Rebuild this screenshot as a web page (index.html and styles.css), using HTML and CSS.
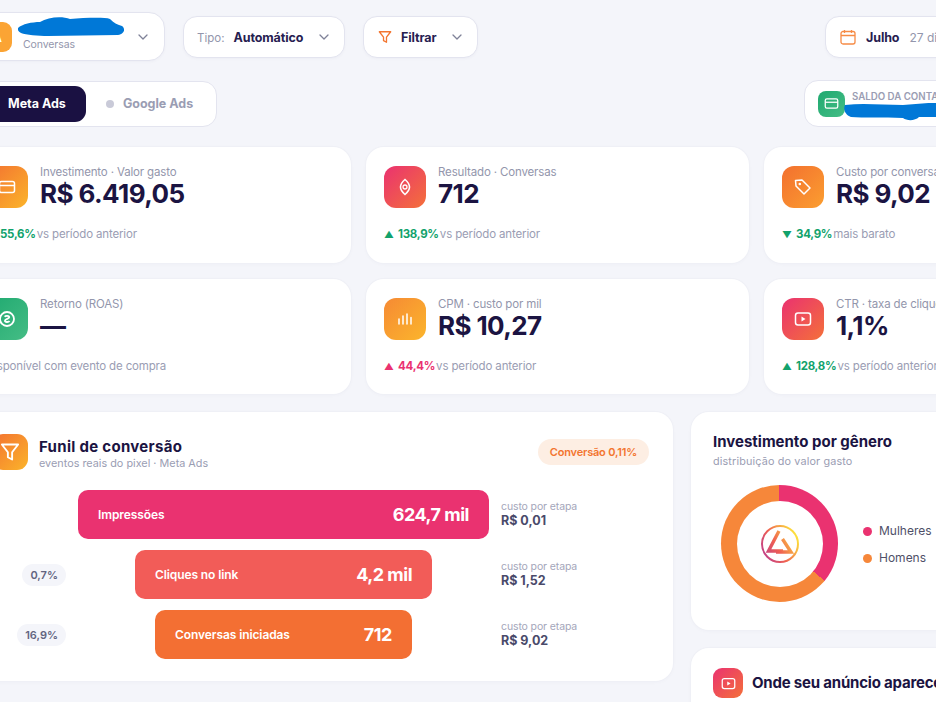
FILE: index.html
```html
<!DOCTYPE html>
<html lang="pt-BR">
<head>
  <title>Painel de campanhas</title>
  <meta charset="UTF-8"/>
  <meta name="viewport" content="width=device-width,initial-scale=1"/>
  <link rel="stylesheet" href="styles.css">
</head>
<body>
<svg class="sprites" width="0" height="0">
  <symbol id="chev" viewBox="0 0 10 10"><path d="M1 3l4 4 4-4" fill="none" stroke="currentColor" stroke-width="1.300" stroke-linecap="round" stroke-linejoin="round"/></symbol>
  <symbol id="funnel" viewBox="0 0 16 16"><path d="M1.500 2h13L9.700 8.200V14l-3.400-1.800V8.200z" fill="none" stroke="currentColor" stroke-width="1.500" stroke-linejoin="round"/></symbol>
  <symbol id="card" viewBox="0 0 18 18"><rect x="1.500" y="3.500" width="15" height="11" rx="2" fill="none" stroke="currentColor" stroke-width="1.500"/><path d="M1.500 7.500h15" stroke="currentColor" stroke-width="1.500"/></symbol>
  <symbol id="play" viewBox="0 0 18 18"><rect x="1.500" y="3" width="15" height="12" rx="2.500" fill="none" stroke="currentColor" stroke-width="1.500"/><path d="M7.500 6.500l4 2.500-4 2.500z" fill="currentColor"/></symbol>
</svg>

<div class="shell">
  <div class="toolbar">
    <div class="pill account">
      <span class="acc-icon">A</span>
      <div class="acc-text">
        <div class="acc-name">
          <svg class="blob blob-acc" viewBox="0 0 107 21"><path d="M0 12C4 8 14 6 22 6 30 1 44 0 52 3 66 2 86 1 92 3 96 7 100 9 104 10 108 13 106 18 100 19L30 20C20 20 8 19 3 17 0 15-1 13 0 12Z"/></svg>
        </div>
        <div class="acc-sub">Conversas</div>
      </div>
      <svg class="chev"><use href="#chev"/></svg>
    </div>
    <div class="pill select">
      <span class="select-label">Tipo:</span>
      <b class="select-value">Automático</b>
      <svg class="chev"><use href="#chev"/></svg>
    </div>
    <div class="pill filter">
      <svg class="filter-icon"><use href="#funnel"/></svg>
      <b class="select-value">Filtrar</b>
      <svg class="chev"><use href="#chev"/></svg>
    </div>
    <div class="pill date">
      <svg class="date-icon" viewBox="0 0 16 16"><rect x="1" y="2.500" width="14" height="12.500" rx="2" fill="none" stroke="currentColor" stroke-width="1.300"/><path d="M1 6.500h14M4.500 1v3M11.500 1v3" stroke="currentColor" stroke-width="1.300"/></svg>
      <b class="select-value">Julho</b>
      <span class="date-days">27 dias</span>
    </div>
  </div>

  <div class="subbar">
    <div class="tabs">
      <div class="tab active"><i class="dot dot-green"></i>Meta Ads</div>
      <div class="tab"><i class="dot"></i>Google Ads</div>
    </div>
    <div class="saldo">
      <span class="saldo-icon"><svg><use href="#card"/></svg></span>
      <div>
        <div class="saldo-label">SALDO DA CONTA</div>
        <div class="saldo-value">
          <svg class="blob blob-saldo" viewBox="0 0 120 18"><path d="M2 2C20 0 40 2 60 2 74 1 90-1 100 0 110 2 116 5 120 7V15C108 14 90 14 76 14 72 18 64 18 60 15 40 14 20 15 8 14 2 12 0 6 2 2Z"/></svg>
        </div>
      </div>
    </div>
  </div>

  <div class="kpis">
    <div class="kpi">
      <div class="kpi-top">
        <span class="kpi-icon grad-orange"><svg><use href="#card"/></svg></span>
        <div>
          <div class="kpi-label">Investimento · Valor gasto</div>
          <div class="kpi-value">R$ 6.419,05</div>
        </div>
      </div>
      <div class="kpi-delta"><b class="good"><i class="tri">▲</i> 55,6%</b> vs período anterior</div>
    </div>
    <div class="kpi">
      <div class="kpi-top">
        <span class="kpi-icon grad-red">
          <svg viewBox="0 0 18 18"><path d="M9 1.500C12.500 4.500 13.500 7 13.500 9S12.500 13.500 9 16.500C5.500 13.500 4.500 11 4.500 9S5.500 4.500 9 1.500z" fill="none" stroke="currentColor" stroke-width="1.600"/><circle cx="9" cy="9" r="2" fill="none" stroke="currentColor" stroke-width="1.300"/></svg>
        </span>
        <div>
          <div class="kpi-label">Resultado · Conversas</div>
          <div class="kpi-value">712</div>
        </div>
      </div>
      <div class="kpi-delta"><b class="good"><i class="tri">▲</i> 138,9%</b> vs período anterior</div>
    </div>
    <div class="kpi">
      <div class="kpi-top">
        <span class="kpi-icon grad-tag">
          <svg viewBox="0 0 18 18"><path d="M1.500 2.500l6.500-.5 8 8-6 6-8-8z" fill="none" stroke="currentColor" stroke-width="1.500" stroke-linejoin="round"/><circle cx="5.800" cy="6" r="1.300" fill="currentColor"/></svg>
        </span>
        <div>
          <div class="kpi-label">Custo por conversa</div>
          <div class="kpi-value">R$ 9,02</div>
        </div>
      </div>
      <div class="kpi-delta"><b class="good"><i class="tri">▼</i> 34,9%</b> mais barato</div>
    </div>
    <div class="kpi">
      <div class="kpi-top">
        <span class="kpi-icon grad-green">
          <svg viewBox="0 0 18 18"><circle cx="9" cy="9" r="7" fill="none" stroke="currentColor" stroke-width="1.800"/><path d="M6.700 6.700C7.500 5.500 11.300 5.500 11.200 7.300 11.200 9 7 8.800 7 10.700 7 12.300 10.500 12.400 11.500 11" fill="none" stroke="currentColor" stroke-width="1.900"/></svg>
        </span>
        <div>
          <div class="kpi-label">Retorno (ROAS)</div>
          <div class="kpi-value">—</div>
        </div>
      </div>
      <div class="kpi-delta">Disponível com evento de compra</div>
    </div>
    <div class="kpi">
      <div class="kpi-top">
        <span class="kpi-icon grad-amber">
          <svg viewBox="0 0 18 18"><path d="M3 9v5M7 6v8M11 4v10M15 7.500V14" stroke="currentColor" stroke-width="1.500" stroke-linecap="round"/></svg>
        </span>
        <div>
          <div class="kpi-label">CPM · custo por mil</div>
          <div class="kpi-value">R$ 10,27</div>
        </div>
      </div>
      <div class="kpi-delta"><b class="bad"><i class="tri">▲</i> 44,4%</b> vs período anterior</div>
    </div>
    <div class="kpi">
      <div class="kpi-top">
        <span class="kpi-icon grad-red"><svg><use href="#play"/></svg></span>
        <div>
          <div class="kpi-label">CTR · taxa de cliques</div>
          <div class="kpi-value">1,1%</div>
        </div>
      </div>
      <div class="kpi-delta"><b class="good"><i class="tri">▲</i> 128,8%</b> vs período anterior</div>
    </div>
  </div>

  <div class="lower">
    <div class="panel funnel-panel">
      <div class="panel-head">
        <span class="panel-icon grad-orange"><svg><use href="#funnel"/></svg></span>
        <div class="panel-titles">
          <div class="panel-title funnel-title">Funil de conversão</div>
          <div class="panel-sub">eventos reais do pixel · Meta Ads</div>
        </div>
        <span class="conv-badge">Conversão 0,11%</span>
      </div>
      <div class="funnel">
        <div class="funnel-row">
          <div class="funnel-pct"></div>
          <div class="funnel-track">
            <div class="bar bar-pink" style="width:100%"><span>Impressões</span><b>624,7 mil</b></div>
          </div>
          <div class="cost"><span>custo por etapa</span><b>R$ 0,01</b></div>
        </div>
        <div class="funnel-row">
          <div class="funnel-pct"><span class="pct">0,7%</span></div>
          <div class="funnel-track">
            <div class="bar bar-coral" style="width:72.3%"><span>Cliques no link</span><b>4,2 mil</b></div>
          </div>
          <div class="cost"><span>custo por etapa</span><b>R$ 1,52</b></div>
        </div>
        <div class="funnel-row">
          <div class="funnel-pct"><span class="pct">16,9%</span></div>
          <div class="funnel-track">
            <div class="bar bar-orange" style="width:62.5%"><span>Conversas iniciadas</span><b>712</b></div>
          </div>
          <div class="cost"><span>custo por etapa</span><b>R$ 9,02</b></div>
        </div>
      </div>
    </div>

    <div class="side">
      <div class="panel gender-panel">
        <div class="panel-title">Investimento por gênero</div>
        <div class="panel-sub gender-sub">distribuição do valor gasto</div>
        <div class="gender-body">
          <div class="donut">
            <div class="donut-hole">
              <svg class="logo" viewBox="0 0 40 40">
                <defs>
                  <linearGradient id="logo-g" gradientUnits="userSpaceOnUse" x1="2" y1="34" x2="38" y2="14"><stop offset="0" stop-color="#b93a92"/><stop offset=".45" stop-color="#ef5f52"/><stop offset="1" stop-color="#fde23c"/></linearGradient>
                </defs>
                <circle cx="20" cy="20" r="18" fill="none" stroke="url(#logo-g)" stroke-width="2"/>
                <path d="M19 7L8.500 27H23M22.500 15L31 28H16" fill="none" stroke="url(#logo-g)" stroke-width="3.400"/>
              </svg>
            </div>
          </div>
          <div class="legend">
            <div class="legend-item"><i class="legend-dot pink"></i>Mulheres</div>
            <div class="legend-item"><i class="legend-dot orange"></i>Homens</div>
          </div>
        </div>
      </div>
      <div class="panel place-panel">
        <span class="place-icon grad-red"><svg><use href="#play"/></svg></span>
        <div class="panel-title place-title">Onde seu anúncio aparece</div>
      </div>
    </div>
  </div>
</div>
</body>
</html>
```

FILE: styles.css
```css
html, body {
  margin: 0;
  height: 702px;
  overflow: hidden;
}

body {
  font-family: Inter, "Noto Sans", sans-serif;
  background: #f4f5fa;
  color: #1b1442;
}

.sprites {
  display: block;
}

/* the page was scrolled sideways when it was captured */
.shell {
  width: 1179px;
  margin-left: -32px;
  padding-top: 12px;
}

.toolbar {
  display: flex;
  align-items: center;
  height: 49px;
}

.pill {
  display: flex;
  align-items: center;
  box-sizing: border-box;
  height: 42px;
  background: #fff;
  border: 1px solid #e3e4ef;
  border-radius: 14px;
  box-shadow: 0 1px 3px rgba(30, 30, 80, .03);
}

.chev {
  width: 10px;
  height: 10px;
  color: #7f8298;
  flex: none;
}

.account {
  width: 197px;
  height: 49px;
  padding: 0 16px 0 13px;
  border-radius: 16px;
}

.acc-icon {
  flex: none;
  width: 30px;
  height: 30px;
  border-radius: 9px;
  background: #fba434;
  color: #fff;
  font-size: 13px;
  font-weight: 700;
  line-height: 30px;
  text-align: center;
}

.acc-text {
  flex: 1;
  margin-left: 11px;
}

.acc-name {
  position: relative;
  height: 16px;
}

.acc-sub {
  font-size: 10.500px;
  color: #9396ac;
  letter-spacing: -.1px;
}

.blob {
  position: absolute;
  fill: #0078d7;
}

.blob-acc {
  left: -5px;
  top: -6px;
  width: 107px;
  height: 21px;
}

.select {
  width: 162px;
  margin-left: 18px;
  padding: 0 15px 0 13px;
}

.select-label {
  padding-top: 2px;
  font-size: 11.500px;
  color: #9396ac;
  margin-right: 9px;
}

.select-value {
  padding-top: 2px;
  font-size: 12.500px;
  font-weight: 700;
  color: #262050;
  flex: 1;
  letter-spacing: -.1px;
}

.filter {
  width: 115px;
  margin-left: 18px;
  padding: 0 15px 0 14px;
}

.filter-icon {
  width: 14px;
  height: 14px;
  color: #f3752f;
  margin-right: 9px;
  flex: none;
}

.date {
  width: 322px;
  margin-left: auto;
  padding: 0 14px;
}

.date-icon {
  width: 16px;
  height: 16px;
  color: #f68b45;
  margin-right: 10px;
  flex: none;
}

.date .select-value {
  flex: none;
  margin-right: 10px;
}

.date-days {
  padding-top: 2px;
  font-size: 12px;
  color: #9396ac;
}

.subbar {
  display: flex;
  justify-content: space-between;
  align-items: center;
  height: 47px;
  margin-top: 19px;
}

.tabs {
  display: flex;
  box-sizing: border-box;
  height: 46px;
  padding: 4px;
  background: #fff;
  border: 1px solid #e3e4ef;
  border-radius: 14px;
}

.tab {
  display: flex;
  align-items: center;
  gap: 9px;
  padding: 0 19px 0 20px;
  font-size: 12.500px;
  font-weight: 700;
  color: #9a9db3;
  border-radius: 11px;
}

.tab.active {
  gap: 8px;
  background: #1a1142;
  color: #fff;
  padding: 0 20px 0 19px;
}

.dot {
  width: 8px;
  height: 8px;
  border-radius: 50%;
  background: #c9cad8;
}

.dot-green {
  background: #1fa970;
}

.saldo {
  display: flex;
  align-items: center;
  gap: 7px;
  box-sizing: border-box;
  width: 343px;
  height: 47px;
  padding: 0 13px;
  background: #fff;
  border: 1px solid #e3e4ef;
  border-radius: 14px;
}

.saldo-icon {
  display: flex;
  align-items: center;
  justify-content: center;
  width: 27px;
  height: 26px;
  border-radius: 8px;
  background: linear-gradient(135deg, #1fa970, #45bd85);
  color: #fff;
}

.saldo-icon svg {
  width: 15px;
  height: 15px;
}

.saldo-label {
  font-size: 9.700px;
  font-weight: 600;
  color: #9a9db3;
  margin-top: -7px;
}

.saldo-value {
  position: relative;
  height: 8px;
}

.blob-saldo {
  left: -9px;
  top: 1px;
  width: 120px;
  height: 18px;
}

.kpis {
  display: grid;
  grid-template-columns: repeat(3, 383px);
  gap: 16px 15px;
  margin-top: 20px;
}

.kpi {
  box-sizing: border-box;
  height: 115.500px;
  padding: 19px 18px 0;
  background: #fff;
  border-radius: 18px;
  box-shadow: 0 0 0 1px #eff0f6, 0 1px 4px rgba(30, 30, 80, .03);
}

.kpi-top {
  display: flex;
  gap: 12px;
}

.kpi-icon {
  display: flex;
  align-items: center;
  justify-content: center;
  flex: none;
  width: 42px;
  height: 42px;
  border-radius: 12px;
  color: #fff;
}

.kpi-icon svg {
  width: 18px;
  height: 18px;
}

.grad-orange { background: linear-gradient(135deg, #f37131, #fbb42a); }
.grad-red { background: linear-gradient(135deg, #ea3270, #f4703a); }
.grad-tag { background: linear-gradient(135deg, #f3702f, #fb9e30); }
.grad-green { background: linear-gradient(135deg, #1fa970, #45bd85); }
.grad-amber { background: linear-gradient(135deg, #f68a34, #fbb52c); }

.kpi-label {
  margin-top: -1px;
  font-size: 11.500px;
  line-height: 14px;
  color: #9396ac;
  letter-spacing: -.15px;
}

.kpi-value {
  font-size: 26px;
  line-height: 30px;
  font-weight: 700;
  color: #1b1442;
  letter-spacing: -.6px;
}

.kpi-delta {
  margin-top: 17px;
  font-size: 11.500px;
  line-height: 16px;
  color: #9a9db3;
  letter-spacing: -.15px;
}

.kpi-delta b {
  letter-spacing: -.3px;
  margin-right: -2px;
}

.tri {
  font-style: normal;
  font-size: 9.500px;
  margin-right: 2px;
}

.good { color: #12a26c; }
.bad { color: #ea3270; }

.lower {
  display: grid;
  grid-template-columns: 705px 456px;
  gap: 18px;
  margin-top: 18px;
}

.panel {
  box-sizing: border-box;
  background: #fff;
  border-radius: 18px;
  box-shadow: 0 0 0 1px #eff0f6, 0 1px 4px rgba(30, 30, 80, .03);
}

.funnel-panel {
  height: 269px;
  padding: 22px 24px 0;
}

.panel-head {
  display: flex;
  align-items: center;
  height: 36px;
}

.panel-icon {
  display: flex;
  align-items: center;
  justify-content: center;
  width: 36px;
  height: 36px;
  border-radius: 11px;
  color: #fff;
}

.panel-icon svg {
  width: 20px;
  height: 20px;
}

.panel-titles {
  flex: 1;
  margin-left: 11px;
  padding-top: 3px;
}

.panel-title {
  font-size: 15px;
  line-height: 20px;
  font-weight: 700;
  color: #1b1442;
}

.funnel-title {
  letter-spacing: .3px;
}

.panel-sub {
  font-size: 10.800px;
  line-height: 14px;
  color: #9a9db3;
  letter-spacing: .02px;
}

.conv-badge {
  padding: 0 12px;
  font-size: 11px;
  line-height: 26px;
  font-weight: 600;
  color: #f3752f;
  background: #fdeee3;
  border-radius: 13px;
  letter-spacing: -.2px;
}

.funnel {
  display: flex;
  flex-direction: column;
  gap: 11px;
  margin-top: 20px;
}

.funnel-row {
  display: grid;
  grid-template-columns: 74px 411px 1fr;
  gap: 12px;
  align-items: center;
}

.funnel-pct {
  text-align: right;
}

.pct {
  display: inline-block;
  padding: 0 8px;
  font-size: 11px;
  line-height: 22px;
  font-weight: 600;
  color: #62647f;
  background: #f4f5fa;
  border-radius: 11px;
}

.funnel-track {
  display: flex;
  justify-content: center;
}

.bar {
  display: flex;
  align-items: center;
  justify-content: space-between;
  box-sizing: border-box;
  height: 49px;
  padding: 0 20px;
  border-radius: 10px;
  color: #fff;
}

.bar span {
  font-size: 12px;
  font-weight: 600;
  letter-spacing: -.1px;
}

.bar b {
  font-size: 18px;
  font-weight: 700;
  letter-spacing: -.5px;
}

.bar-pink { background: #ea3270; }
.bar-coral { background: #f25c58; }
.bar-orange { background: #f36f33; }

.cost span {
  display: block;
  font-size: 10.500px;
  line-height: 13px;
  color: #a4a6ba;
  letter-spacing: -.12px;
}

.cost b {
  display: block;
  font-size: 12.500px;
  line-height: 16px;
  font-weight: 700;
  color: #4a4a6a;
}

.side {
  display: flex;
  flex-direction: column;
  gap: 18px;
}

.gender-panel {
  height: 218px;
  padding: 20px 22px 0;
}

.gender-sub {
  margin-top: 3px;
  letter-spacing: .15px;
}

.gender-body {
  display: flex;
  align-items: center;
  margin-top: 16px;
  padding-left: 8px;
}

.donut {
  display: flex;
  align-items: center;
  justify-content: center;
  width: 117px;
  height: 117px;
  border-radius: 50%;
  background: conic-gradient(#ea3270 0 36%, #f6873a 36% 100%);
}

.donut-hole {
  display: flex;
  align-items: center;
  justify-content: center;
  width: 86px;
  height: 86px;
  border-radius: 50%;
  background: #fff;
}

.logo {
  width: 40px;
  height: 40px;
}

.legend {
  display: flex;
  flex-direction: column;
  gap: 11px;
  margin-left: 25px;
  padding-top: 2px;
}

.legend-item {
  display: flex;
  align-items: center;
  gap: 7px;
  font-size: 12px;
  line-height: 16px;
  color: #4f5068;
}

.legend-dot {
  width: 9px;
  height: 9px;
  border-radius: 50%;
}

.pink { background: #ea3270; }
.orange { background: #f6873a; }

.place-panel {
  display: flex;
  align-items: flex-start;
  height: 120px;
  padding: 20px 22px 0;
}

.place-icon {
  display: flex;
  align-items: center;
  justify-content: center;
  width: 30px;
  height: 30px;
  border-radius: 9px;
  color: #fff;
}

.place-icon svg {
  width: 15px;
  height: 15px;
}

.place-title {
  margin-left: 9px;
  line-height: 30px;
  letter-spacing: -.2px;
}
```
